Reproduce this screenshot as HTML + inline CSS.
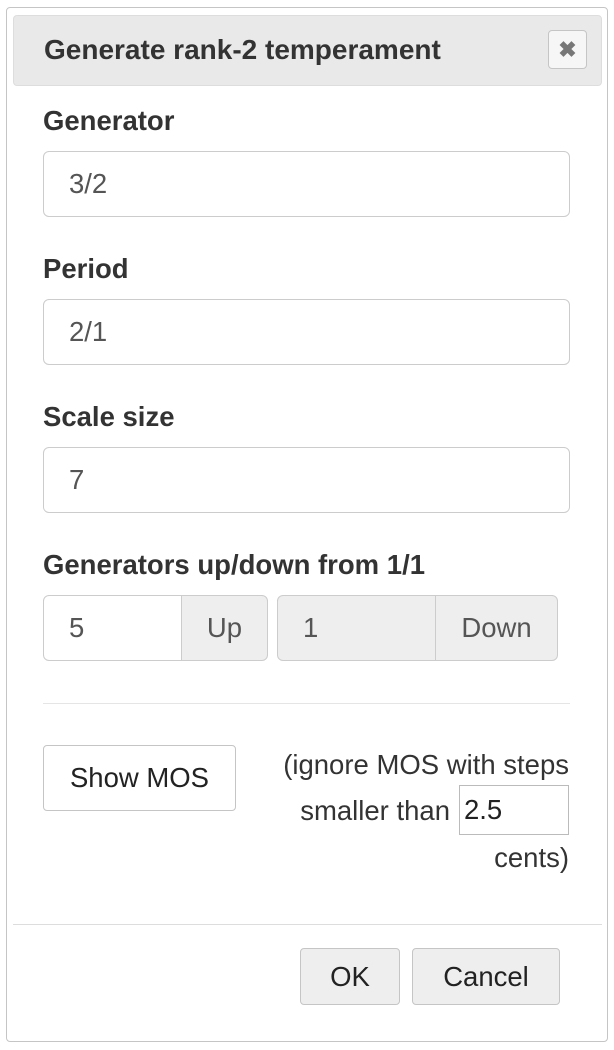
<!DOCTYPE html>
<html><head><style>
*{box-sizing:border-box;margin:0;padding:0}
body{width:614px;height:1050px;background:#fff;font-family:"Liberation Sans",Arial,sans-serif;color:#333;position:relative;overflow:hidden}
.abs{position:absolute}
.dlg{left:6px;top:7px;width:602px;height:1035px;border:1px solid #c5c5c5;border-radius:4px}
.title{left:13px;top:15px;width:589px;height:71px;background:#e9e9e9;border:1px solid #ddd;border-radius:4px;font-weight:bold;font-size:28px;color:#333;padding:18px 0 0 30px}
.close{left:548px;top:30px;width:39px;height:39px;border:1px solid #c5c5c5;border-radius:4px;background:#f6f6f6;color:#777;font-size:22px;text-align:center;line-height:37px;font-weight:bold}
.lbl{left:43px;font-weight:bold;font-size:27.5px}
.inp{left:43px;width:527px;height:66px;border:1px solid #ccc;border-radius:6px;font-size:27.5px;padding:0 25px;line-height:64px;color:#555}
.seg{border:1px solid #ccc;height:66px;font-size:27.5px;line-height:64px;color:#555}
.btn{border:1px solid #c5c5c5;border-radius:4px;font-size:27.5px;text-align:center;color:#222}
.t{font-size:27.5px;color:#333;right:45px;text-align:right}
</style></head><body>
<div class="abs dlg"></div>
<div class="abs title">Generate rank-2 temperament</div>
<div class="abs close">✖</div>
<div class="abs lbl" style="top:105px">Generator</div>
<div class="abs inp" style="top:151px">3/2</div>
<div class="abs lbl" style="top:253px">Period</div>
<div class="abs inp" style="top:299px">2/1</div>
<div class="abs lbl" style="top:401px">Scale size</div>
<div class="abs inp" style="top:447px">7</div>
<div class="abs lbl" style="top:549px">Generators up/down from 1/1</div>
<div class="abs seg" style="left:43px;top:595px;width:139px;border-radius:6px 0 0 6px;padding-left:25px;background:#fff">5</div>
<div class="abs seg" style="left:181px;top:595px;width:87px;border-radius:0 6px 6px 0;background:#eee;text-align:center">Up</div>
<div class="abs seg" style="left:277px;top:595px;width:159px;border-radius:6px 0 0 6px;padding-left:25px;background:#eee">1</div>
<div class="abs seg" style="left:435px;top:595px;width:123px;border-radius:0 6px 6px 0;background:#eee;text-align:center">Down</div>
<div class="abs" style="left:43px;top:703px;width:527px;height:1px;background:#e5e5e5"></div>
<div class="abs btn" style="left:43px;top:745px;width:193px;height:66px;line-height:64px;background:#fff">Show MOS</div>
<div class="abs t" style="top:749px">(ignore MOS with steps</div>
<div class="abs t" style="top:795px;right:164px">smaller than</div>
<div class="abs" style="left:459px;top:785px;width:110px;height:50px;border:1px solid #bbb;font-size:27.5px;line-height:48px;padding-left:4px;color:#222">2.5</div>
<div class="abs t" style="top:842px">cents)</div>
<div class="abs" style="left:13px;top:924px;width:589px;height:1px;background:#ddd"></div>
<div class="abs btn" style="left:300px;top:948px;width:100px;height:57px;line-height:55px;background:#eee">OK</div>
<div class="abs btn" style="left:412px;top:948px;width:148px;height:57px;line-height:55px;background:#eee">Cancel</div>
</body></html>
